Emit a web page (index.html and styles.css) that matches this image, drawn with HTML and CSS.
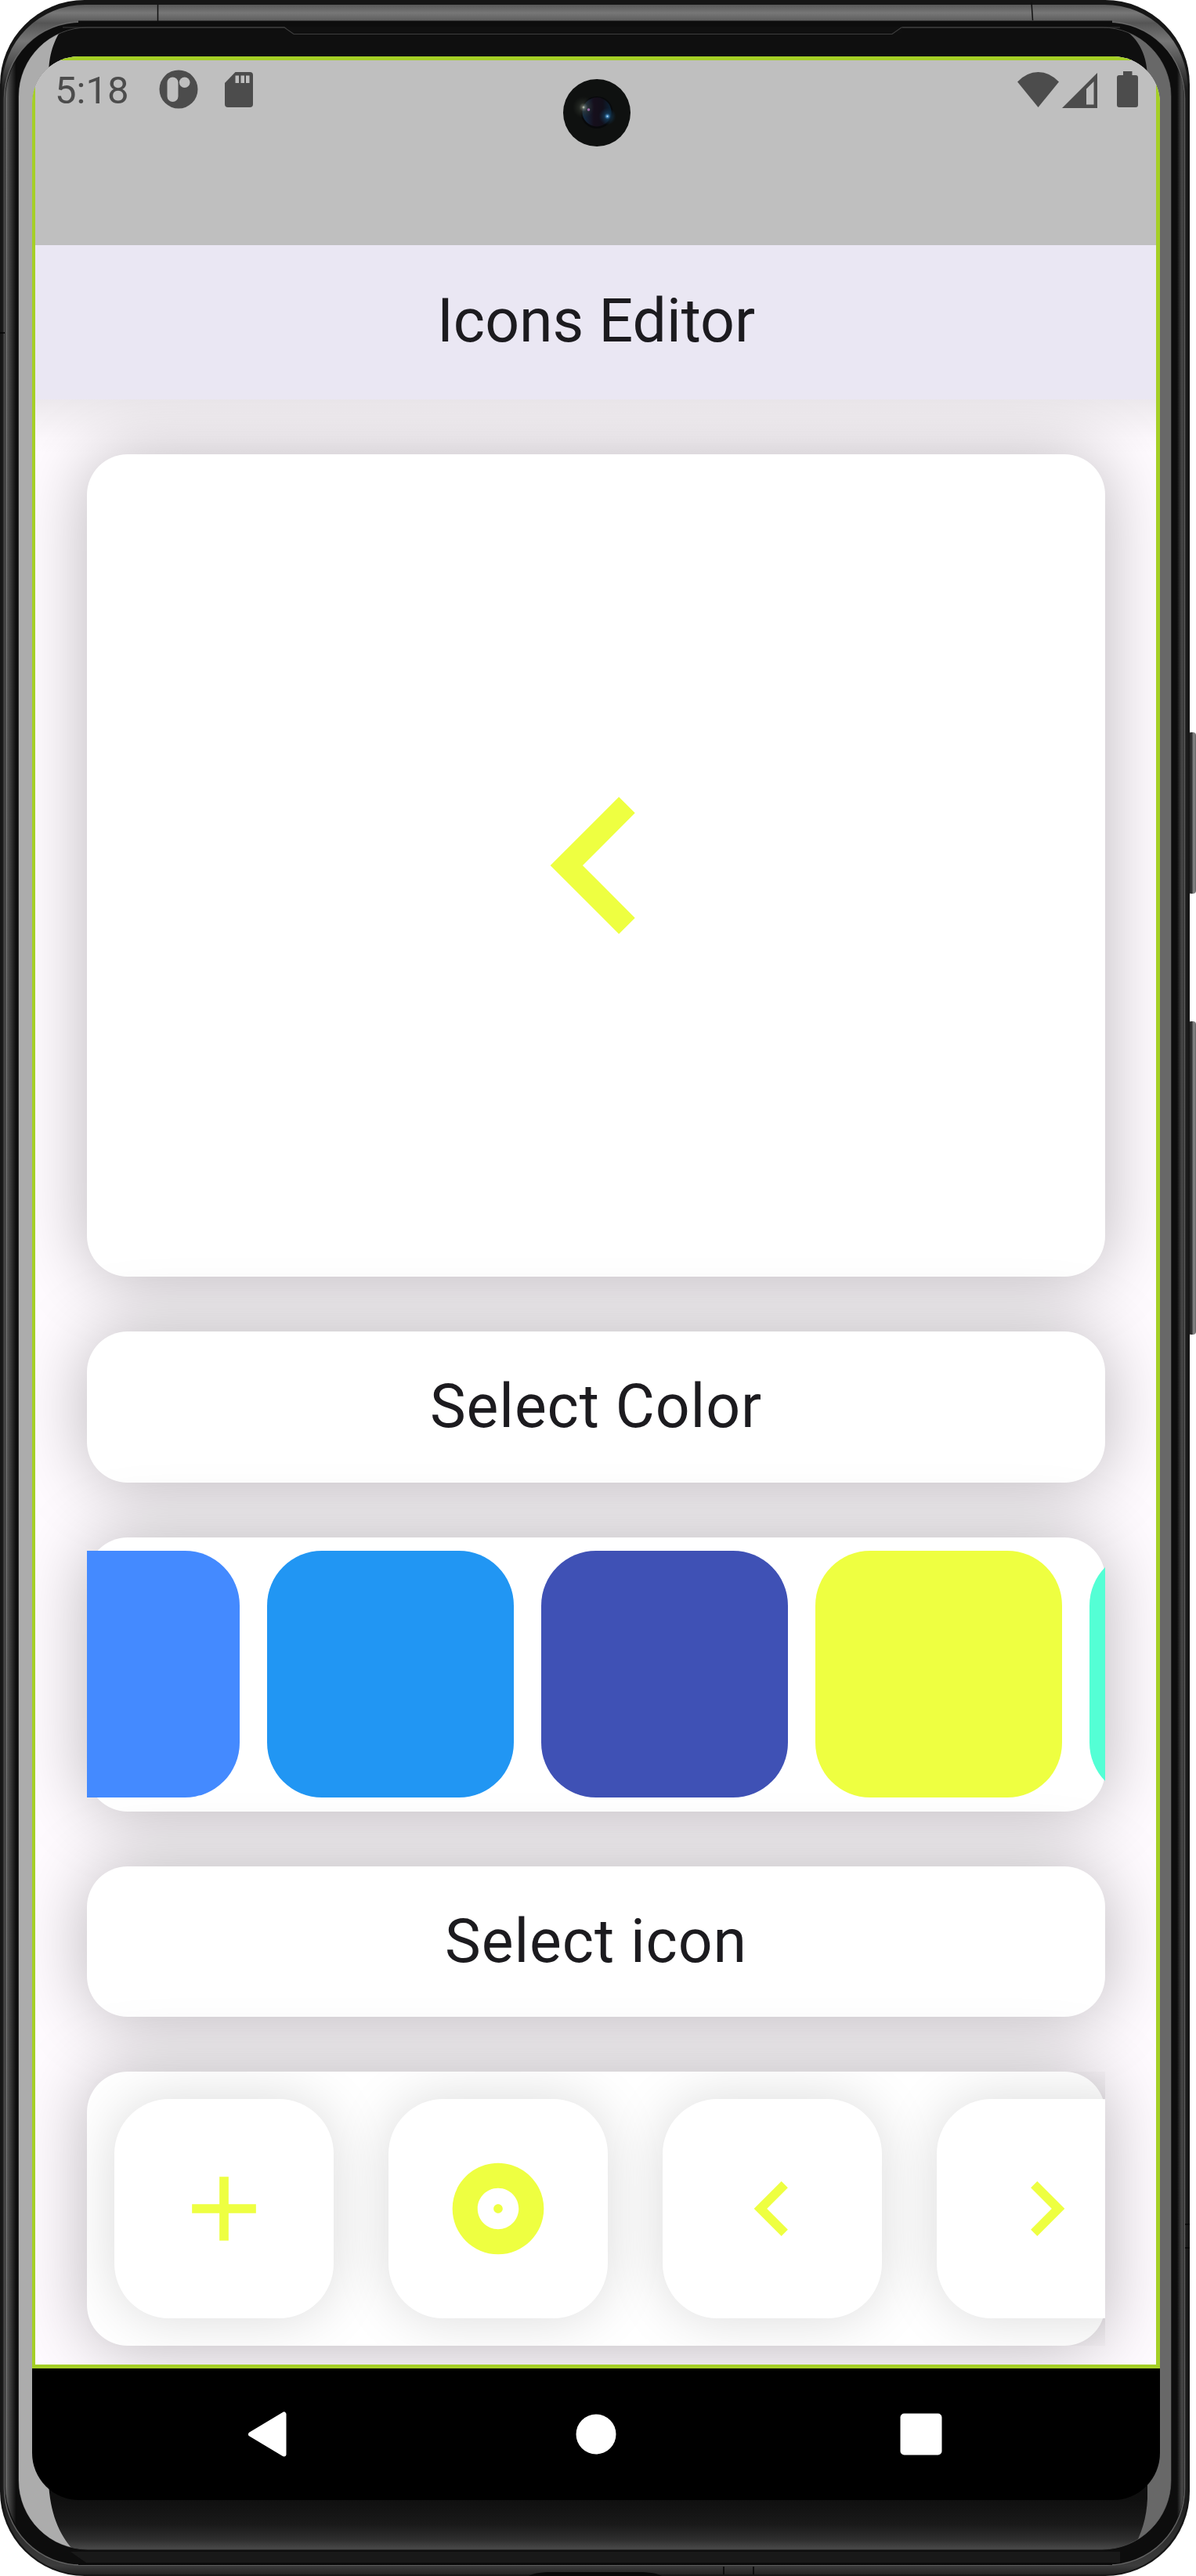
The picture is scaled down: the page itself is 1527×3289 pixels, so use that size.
FILE: index.html
```html
<!DOCTYPE html>
<html lang="en">
<head>
<meta charset="utf-8">
<title>Icons Editor</title>
<link rel="stylesheet" href="styles.css">
</head>
<body>
<div class="device">
  <svg class="device-frame" viewBox="0 0 1527 3289" aria-hidden="true">
    <defs>
      <linearGradient id="metal" gradientUnits="userSpaceOnUse" x1="0" y1="0" x2="0" y2="3289">
        <stop offset="0.0015" stop-color="#555"/>
        <stop offset="0.005" stop-color="#777"/>
        <stop offset="0.009" stop-color="#555"/>
        <stop offset="0.016" stop-color="#777"/>
        <stop offset="0.035" stop-color="#1c1c1c"/>
        <stop offset="0.97" stop-color="#1c1c1c"/>
        <stop offset="0.996" stop-color="#3c3c3c"/>
        <stop offset="1" stop-color="#1e1e1e"/>
      </linearGradient>
      <linearGradient id="bezel" gradientUnits="userSpaceOnUse" x1="7" y1="0" x2="1512" y2="0">
        <stop offset="0" stop-color="#6c6c6c"/>
        <stop offset="0.003" stop-color="#444"/>
        <stop offset="0.009" stop-color="#0d0d0d"/>
        <stop offset="0.994" stop-color="#0d0d0d"/>
        <stop offset="0.998" stop-color="#484848"/>
        <stop offset="1" stop-color="#333"/>
      </linearGradient>
      <linearGradient id="glass" gradientUnits="userSpaceOnUse" x1="0" y1="3190" x2="0" y2="3256">
        <stop offset="0" stop-color="#0f0f0f"/>
        <stop offset="0.5" stop-color="#191919"/>
        <stop offset="0.8" stop-color="#2e2e2e"/>
        <stop offset="1" stop-color="#4c4c4c"/>
      </linearGradient>
      <linearGradient id="key" x1="0" y1="0" x2="1" y2="0">
        <stop offset="0" stop-color="#1d1d1d"/>
        <stop offset="0.45" stop-color="#333"/>
        <stop offset="0.7" stop-color="#8a8a8a"/>
        <stop offset="1" stop-color="#666"/>
      </linearGradient>
      <clipPath id="glassClip"><rect x="24" y="35" width="1471" height="3220" rx="88"/></clipPath>
    </defs>
    <rect x="1517" y="935" width="10" height="206" rx="4" fill="url(#key)"/>
    <rect x="1517" y="1304" width="10" height="400" rx="4" fill="url(#key)"/>
    <rect width="1519" height="3289" rx="108" fill="#161616"/>
    <rect x="2.5" y="6" width="1514" height="3281" rx="106" fill="url(#metal)"/>
    <path d="M201.500 6V30M1317 3l1.500 23" stroke="#111" stroke-width="1.500"/>
    <rect x="5.500" y="28" width="1507" height="3247" rx="98" fill="#0d0d0d" stroke="#777" stroke-opacity=".75" stroke-width="1.500"/>
    <path d="M100 28H1420" stroke="#0d0d0d" stroke-width="3"/>
    <rect x="7" y="30" width="1505" height="3241" rx="96" fill="url(#bezel)"/>
    <path d="M90 3258H1430V3272H110Z" fill="#191919"/>
    <path d="M100 3273.500H1420" stroke="#0b0b0b" stroke-width="3"/>
    <rect x="24" y="35" width="1471" height="3220" rx="88" fill="url(#glass)" stroke="#444" stroke-width="1"/>
    <g clip-path="url(#glassClip)">
      <path d="M80 35C66 56 62 74 62 100V3170C64 3208 75 3236 94 3256H20V35Z" fill="#acacac"/>
      <path d="M1430 35C1456 48 1465 74 1465 100V3190C1464 3215 1457 3238 1445 3256H1500V35Z" fill="#686868"/>
    </g>
    <path d="M363 34H1152V42.500H1140H375Z" fill="#101010"/>
    <path d="M80 35H363L375 43.500H1139L1151 35H1430" fill="none" stroke="#3f3f3f" stroke-width="1.200"/>
    <path d="M0 425H6M1513 2840h6M1513 2870h6M924 3277v10M962 3277v10" stroke="#050505" stroke-width="1.500"/>
    <path d="M675 3289C685 3284 695 3284 710 3284H808C825 3284 835 3284 845 3289Z" fill="#080808"/>
  </svg>

  <main class="screen">
    <div class="app">
      <header class="status-bar">
        <div class="status-group">
          <span class="clock">5:18</span>
          <svg class="icon-notification" width="50" height="50" viewBox="0 0 50 50"><circle cx="25" cy="25" r="24.500" fill="#4c4c4c"/><rect x="10.500" y="9.500" width="14" height="31.500" rx="7" fill="#bfbfbf"/><circle cx="32.700" cy="16.200" r="6.800" fill="#bfbfbf"/></svg>
          <svg class="icon-card" width="36" height="45" viewBox="0 0 36 45"><path d="M13.500 0H32q4 0 4 4V41q0 4-4 4H4q-4 0-4-4V14Z" fill="#4c4c4c"/><path d="M13.500 4.500h4.500v9.500h-4.500zM20.500 4.500h4.500v9.500h-4.500zM27 4.500h4.500v9.500h-4.500z" fill="#bfbfbf"/></svg>
        </div>
        <div class="status-group">
          <svg width="53" height="45" viewBox="0 0 53 45"><path d="M0 12.500Q12 0 26.500 0T53 12.500L26.500 45Z" fill="#4c4c4c"/></svg>
          <svg class="icon-signal" width="45" height="45" viewBox="0 0 45 45"><path fill-rule="evenodd" d="M45 0V45H0ZM40.500 11L31 20.500V40.500H40.500Z" fill="#4c4c4c"/></svg>
          <svg class="icon-battery" width="27" height="46" viewBox="0 0 27 46"><path d="M8 0h11.500v5H24q3 0 3 3v35q0 3-3 3H3q-3 0-3-3V8q0-3 3-3h5Z" fill="#4c4c4c"/></svg>
        </div>
      </header>
      <h1 class="app-bar">Icons Editor</h1>
      <div class="content">
        <section class="card preview">
          <svg width="350" height="350" viewBox="0 0 24 24"><path d="M15.410 7.410L14 6l-6 6 6 6 1.410-1.410L10.830 12z"/></svg>
        </section>
        <h2 class="card label">Select Color</h2>
        <section class="card strip">
          <div class="viewport colors">
            <button class="swatch blue-accent" aria-label="Blue accent"></button>
            <button class="swatch blue" aria-label="Blue"></button>
            <button class="swatch indigo" aria-label="Indigo"></button>
            <button class="swatch lime" aria-label="Lime"></button>
            <button class="swatch teal" aria-label="Teal"></button>
          </div>
        </section>
        <h2 class="card label">Select icon</h2>
        <section class="card strip">
          <div class="viewport icons">
            <button class="tile" aria-label="Add"><svg width="140" height="140" viewBox="0 0 24 24"><path d="M19 13h-6v6h-2v-6H5v-2h6V5h2v6h6v2z"/></svg></button>
            <button class="tile" aria-label="Album"><svg width="140" height="140" viewBox="0 0 24 24"><path d="M12 2C6.480 2 2 6.480 2 12s4.480 10 10 10 10-4.480 10-10S17.520 2 12 2zm0 14.500c-2.490 0-4.500-2.010-4.500-4.500S9.510 7.500 12 7.500s4.500 2.010 4.500 4.500-2.010 4.500-4.500 4.500zm0-5.500c-.55 0-1 .45-1 1s.45 1 1 1 1-.45 1-1-.45-1-1-1z"/></svg></button>
            <button class="tile" aria-label="Previous"><svg width="140" height="140" viewBox="0 0 24 24"><path d="M15.410 7.410L14 6l-6 6 6 6 1.410-1.410L10.830 12z"/></svg></button>
            <button class="tile" aria-label="Next"><svg width="140" height="140" viewBox="0 0 24 24"><path d="M10 6L8.590 7.410 13.170 12l-4.580 4.590L10 18l6-6z"/></svg></button>
          </div>
        </section>
      </div>
      <div class="focus-outline"></div>
    </div>
    <nav class="nav-bar">
      <svg width="60" height="60" viewBox="-30 -30 60 60"><path d="M-24.500-.5L18-26V25Z" transform="translate(.5 .5)" fill="#fff" stroke="#fff" stroke-width="6" stroke-linejoin="round"/></svg>
      <svg width="60" height="60" viewBox="-30 -30 60 60"><circle r="25.500" fill="#fff"/></svg>
      <svg width="60" height="60" viewBox="-30 -30 60 60"><rect x="-28.500" y="-26.500" width="53" height="53" rx="5" fill="#fff"/></svg>
    </nav>
    <svg class="camera" width="88" height="88" viewBox="0 0 88 88">
      <defs>
        <radialGradient id="flareWarm"><stop offset="0" stop-color="#d8dccb"/><stop offset="0.15" stop-color="#8b9182" stop-opacity=".6"/><stop offset="0.4" stop-color="#3a4038" stop-opacity=".5"/><stop offset="1" stop-color="#2a2f28" stop-opacity="0"/></radialGradient>
        <radialGradient id="flareBlue"><stop offset="0" stop-color="#c4e8ff"/><stop offset="0.15" stop-color="#3d7fb5"/><stop offset="0.35" stop-color="#17405f" stop-opacity=".7"/><stop offset="1" stop-color="#123450" stop-opacity="0"/></radialGradient>
        <linearGradient id="lens"><stop offset="0" stop-color="#13304a"/><stop offset="0.4" stop-color="#160f1c"/><stop offset="0.7" stop-color="#120f1a"/><stop offset="1" stop-color="#0b2438"/></linearGradient>
      </defs>
      <circle cx="44" cy="44" r="43" fill="#0f1110"/>
      <circle cx="44" cy="43.500" r="20.500" fill="#08090b"/>
      <circle cx="44" cy="43" r="18.500" fill="url(#lens)"/>
      <circle cx="27" cy="37" r="14" fill="url(#flareWarm)"/>
      <circle cx="33.500" cy="40" r="1.800" fill="#a06ba8"/>
      <circle cx="57.500" cy="48.500" r="11" fill="url(#flareBlue)"/>
    </svg>
  </main>
</div>
</body>
</html>
```
FILE: styles.css
```css
* { box-sizing: border-box; }

body {
  margin: 0;
  background: #fff;
  font-family: Roboto, "Liberation Sans", sans-serif;
  color: #1c1b1f;
}

h1, h2 { margin: 0; font-weight: 400; font-size: 77px; }
button { border: 0; padding: 0; flex: none; }
svg { display: block; flex: none; }

.device {
  position: relative;
  width: 1527px;
  height: 3289px;
  padding: 72px 0 0 41px;
  overflow: hidden;
}
.device-frame { position: absolute; inset: 0; width: 1527px; height: 3289px; }

.screen {
  position: relative;
  display: flex;
  flex-direction: column;
  width: 1440px;
  height: 3120px;
  border-radius: 60px;
  overflow: hidden;
  background: #000;
}

.app {
  position: relative;
  display: flex;
  flex-direction: column;
  height: 2952px;
  overflow: hidden;
  background: #fffbff;
}

.status-bar {
  display: flex;
  justify-content: space-between;
  align-items: flex-start;
  height: 241px;
  flex: none;
  padding: 17px 28px 0 29px;
  background: #bfbfbf;
}
.status-group { display: flex; align-items: center; height: 50px; }
.clock { font-size: 49px; line-height: 50px; color: #4c4c4c; padding-top: 3px; width: 97px; }
.icon-notification { margin-left: 36px; }
.icon-card { margin-left: 34px; }
.icon-signal { margin-left: 4px; margin-top: 2px; }
.icon-battery { margin-left: 25px; }

.app-bar {
  position: relative;
  z-index: 1;
  display: flex;
  align-items: center;
  justify-content: center;
  flex: none;
  height: 197px;
  padding-bottom: 3px;
  background: #eae7f3;
}

.content {
  display: flex;
  flex-direction: column;
  gap: 70px;
  padding: 70px;
  background: linear-gradient(rgba(0, 0, 0, .075), rgba(0, 0, 0, .045) 25px, rgba(0, 0, 0, .012) 50px, transparent 70px);
}

.card {
  flex: none;
  background: #fff;
  border-radius: 52px;
  box-shadow: 0 2px 92px rgba(0, 0, 0, .28);
}
.preview {
  display: flex;
  align-items: center;
  justify-content: center;
  height: 1050px;
  fill: #eeff41;
}
.label {
  display: flex;
  align-items: center;
  justify-content: center;
  height: 192.5px;
  letter-spacing: .875px;
}
.strip { height: 350px; }

.viewport { display: flex; height: 350px; overflow: hidden; align-items: center; }
.colors { gap: 35px; }
.swatch { width: 315px; height: 315px; border-radius: 70px; }
.swatch:first-child { margin-left: -120px; }
.blue-accent { background: #448aff; }
.blue { background: #2196f3; }
.indigo { background: #3f51b5; }
.lime { background: #eeff41; }
.teal { background: #54ffd5; }

.icons { gap: 70px; padding-left: 35px; }
.tile {
  display: flex;
  align-items: center;
  justify-content: center;
  width: 280px;
  height: 280px;
  border-radius: 70px;
  background: #fff;
  fill: #eeff41;
  box-shadow: 0 0 70px rgba(0, 0, 0, .15);
}

.focus-outline {
  position: absolute;
  inset: 0;
  z-index: 2;
  border: 5px solid #a5cf26;
  border-left-width: 4.5px;
  pointer-events: none;
}

.nav-bar {
  display: grid;
  grid-template-columns: repeat(3, 417px);
  justify-content: center;
  justify-items: center;
  align-items: center;
  height: 168px;
}

.camera { position: absolute; left: 676.5px; top: 28px; }
```
